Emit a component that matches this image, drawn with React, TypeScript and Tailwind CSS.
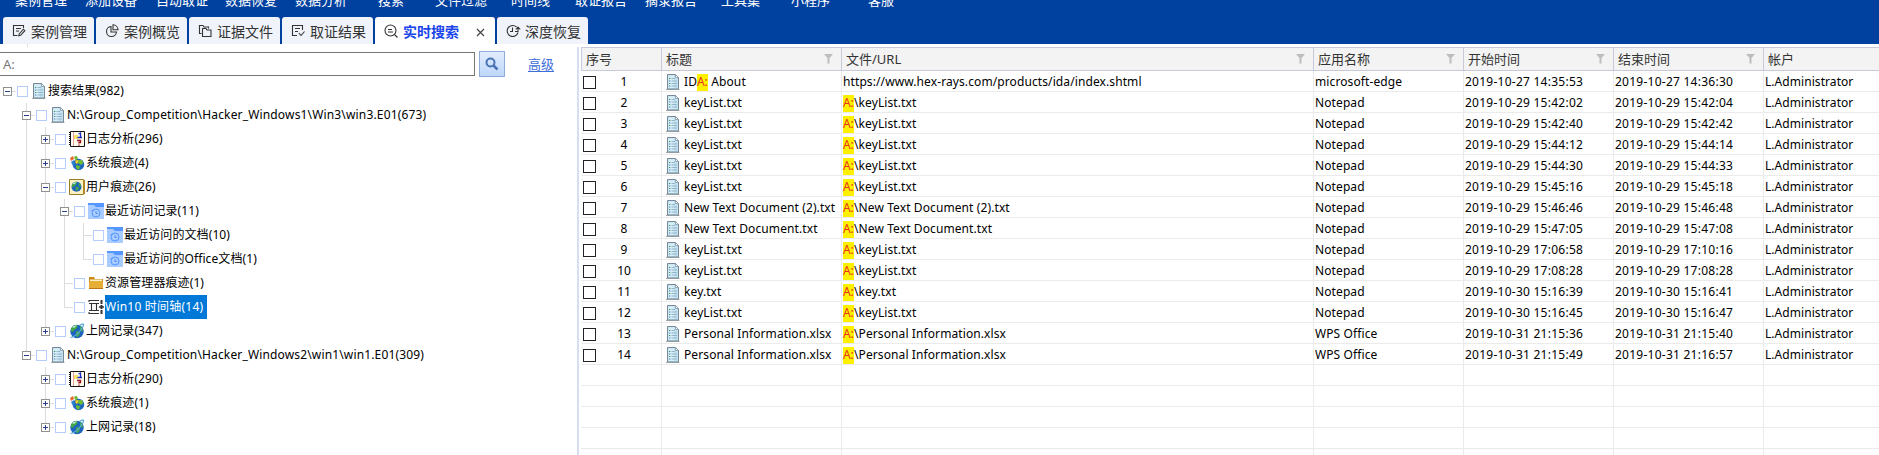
import React from "react";

const menus: [string, string][] = [
  ["案例管理", "w-[70px]"],
  ["添加设备", "w-[71px]"],
  ["自动取证", "w-[69px]"],
  ["数据恢复", "w-[70px]"],
  ["数据分析", "w-[83px]"],
  ["搜索", "w-[57px]"],
  ["文件过滤", "w-[76px]"],
  ["时间线", "w-[64px]"],
  ["取证报告", "w-[70px]"],
  ["摘录报告", "w-[76px]"],
  ["工具集", "w-[70px]"],
  ["小程序", "w-[77px]"],
  ["客服", "w-[40px]"],
];

function TabIcon({ kind }: { kind: string }) {
  return (
    <svg className="h-[14px] w-[14px] shrink-0 overflow-visible" viewBox="0 0 14 14" fill="none" stroke="#333" strokeWidth="1.1">
      {kind === "manage" && (
        <>
          <path d="M11.5 4V1.5H1.5V11.500H5.500M4 4.500H9M4 7H7" />
          <path d="M11.300 5.200L12.800 6.700L8.600 11.300L6.800 11.800L7.200 10Z" />
        </>
      )}
      {kind === "overview" && (
        <>
          <path d="M6 2.500A5 5 0 1 0 11.500 8H6Z" />
          <path d="M8 .8A5.200 5.200 0 0 1 13 5.800H8Z" />
        </>
      )}
      {kind === "files" && (
        <>
          <path d="M3.500 9.500H1.500V1.500H5L6 3H10.500V4.500" />
          <path d="M4.500 4.500H8L9 6H13V12.500H4.500Z" />
        </>
      )}
      {kind === "results" && (
        <>
          <path d="M11.500 6V1.500H1.500V11.500H6M4 4.500H9M4 7.500H7" />
          <path d="M7.800 9L10 11.500L13.500 7.500" />
        </>
      )}
      {kind === "search" && (
        <>
          <circle cx="6.500" cy="6.500" r="5.500" />
          <path d="M10.500 10.500L13.500 13.500M4 5.500H8M4 8H9" />
        </>
      )}
      {kind === "recover" && (
        <>
          <path d="M10.500 3A5.500 5.500 0 1 0 12 8.500M6.500 3.500V7.500H4" />
          <path d="M9 7.500H12V3.500M9.800 5.500L12 3L14.200 5.500" />
        </>
      )}
    </svg>
  );
}

const tabs = [
  { label: "案例管理", kind: "manage" },
  { label: "案例概览", kind: "overview" },
  { label: "证据文件", kind: "files" },
  { label: "取证结果", kind: "results" },
  { label: "实时搜索", kind: "search", active: true },
  { label: "深度恢复", kind: "recover" },
];

function DocIcon() {
  return (
    <svg className="h-4 w-[14px] shrink-0" viewBox="0 0 14 16">
      <path d="M0 15.500H13.500" stroke="#aaa" />
      <path d="M1.500.5H9.500L12.500 3.500V15H1.500Z" fill="#c4e1ef" stroke="#75899a" />
      <path d="M2.500 1.500H8V14H2.500Z" fill="#d7edf7" />
      <path d="M9.500.5V3.500H12.500Z" fill="#fff" stroke="#75899a" strokeWidth=".7" />
      <path d="M5.500 4.500H9M5.500 7H11M5.500 9.500H11M5.500 12H11" stroke="#91b5cb" />
      <path d="M3 4.500H4.300M3 9.500H4.300" stroke="#449657" />
      <path d="M3 7H4.300M3 12H4.300" stroke="#4878b8" />
    </svg>
  );
}

function Globe() {
  return (
    <>
      <circle cx="8" cy="8.500" r="6.700" fill="#1c64bd" />
      <path d="M3 4Q5 1.500 8 2L8.500 4L7 6L5 7L4 9L2 8Q1.500 6 3 4M7 8L11 9L10.500 12L8 14.500L7 12ZM11 3L14 6L13 9L11 7Z" fill="#46a844" />
      <path d="M3 4Q5 2 8 2.500L5 5Z" fill="#b9e7dd" />
    </>
  );
}

function TreeIcon({ kind }: { kind: string }) {
  if (kind === "doc") return <DocIcon />;
  return (
    <svg className="h-4 w-4 shrink-0" viewBox="0 0 16 16">
      {kind === "log" && (
        <>
          <path d="M1.500.5H15.500V15.500H1.500Z" fill="#fffbea" stroke="#111" />
          <path d="M.5 1V15" stroke="#111" strokeDasharray="1 1" />
          <path d="M2 1H4V15H2Z" fill="#fff" />
          <path d="M4.500 1V15" stroke="#e99a9a" />
          <path d="M5 4H9V8H5Z" fill="#f3e36a" />
          <path d="M9.500 3L11.500 2V6M8.500 6.500H13" stroke="#1528c8" strokeWidth="1.300" fill="none" />
          <path d="M8 9.500H11.500V11.500H10V12.500M10 13.500V14.800" stroke="#9d1020" strokeWidth="1.300" fill="none" />
        </>
      )}
      {kind === "system" && (
        <>
          <circle cx="9.500" cy="9.500" r="5.700" fill="#1c64bd" />
          <path d="M9 5L13 5L14.500 8L12 10L9 8ZM7 10L11 11L10 15L7 13Z" fill="#6cba38" />
          <path d="M1 3L4 1L5 4L2 6Z" fill="#e9662d" />
          <path d="M5 1.500L8 1L9 4L6 5Z" fill="#6dbb31" />
          <path d="M2 7L5 5L6 9L4 11Z" fill="#2f7fd1" />
          <path d="M6 5.500L9 5L9 8L7 9Z" fill="#f4c628" />
        </>
      )}
      {kind === "user" && (
        <>
          <path d="M.5.5H14.500V15.500H.5Z" fill="#fbf3c6" stroke="#9a7c20" />
          <path d="M14 1H16V15H14Z" fill="#b08a26" />
          <g transform="translate(1.500 1.400) scale(.75)"><Globe /></g>
        </>
      )}
      {kind === "recent" && (
        <>
          <path d="M0 0H16V16H0Z" fill="#a9cbff" />
          <path d="M0 0H16V4H8L6 2H0Z" fill="#5596ff" />
          <circle cx="8" cy="10" r="4" stroke="#5596ff" fill="none" />
          <path d="M3.500 7.500H6M8 8V10.500H10" stroke="#5596ff" fill="none" />
        </>
      )}
      {kind === "folder" && (
        <>
          <path d="M1 2H6L7 4H15V14H1Z" fill="#c88717" />
          <path d="M2 4.500H14V6H2Z" fill="#fff3c7" />
          <path d="M1 6H15V14H1Z" fill="#e7ad35" />
          <path d="M1 13.500H15" stroke="#b97812" />
        </>
      )}
      {kind === "timeline" && (
        <>
          <path d="M1 3V1.500H11M1 13V14.500H11M3.500 4V12M8.500 4V12M1 4.500H11M1 11.500H11" stroke="#333" strokeWidth="1.100" fill="none" />
          <path d="M13.500 1V15" stroke="#333" strokeWidth="2" strokeDasharray="4 1" />
          <path d="M11 8H16" stroke="#333" strokeWidth="1.500" />
        </>
      )}
      {kind === "web" && (
        <>
          <Globe />
          <path d="M1.500 14.500Q6 14 11 8Q15 3 14.500 1.200Q13 .8 10.500 2.500" fill="none" stroke="#58a6d4" strokeWidth="1.200" />
        </>
      )}
    </svg>
  );
}

type Node = { label: string; icon: string; guides: string; exp?: "+" | "-"; selected?: boolean; fit?: string };

// One letter per indent column: "." blank, "|" passing line, "L" last child, "T" child with siblings below.
const tree: Node[] = [
  { label: "搜索结果(982)", icon: "doc", guides: ".", exp: "-" },
  { label: "N:\\Group_Competition\\Hacker_Windows1\\Win3\\win3.E01(673)", icon: "doc", guides: ".T", exp: "-", fit: "tracking-[0.16px]" },
  { label: "日志分析(296)", icon: "log", guides: ".|T", exp: "+", fit: "tracking-[0.1px]" },
  { label: "系统痕迹(4)", icon: "system", guides: ".|T", exp: "+", fit: "tracking-[0.1px]" },
  { label: "用户痕迹(26)", icon: "user", guides: ".|T", exp: "-", fit: "tracking-[0.1px]" },
  { label: "最近访问记录(11)", icon: "recent", guides: ".||T", exp: "-", fit: "tracking-[0.1px]" },
  { label: "最近访问的文档(10)", icon: "recent", guides: ".|||T", fit: "tracking-[0.1px]" },
  { label: "最近访问的Office文档(1)", icon: "recent", guides: ".|||L", fit: "tracking-[0.1px]" },
  { label: "资源管理器痕迹(1)", icon: "folder", guides: ".||T", fit: "tracking-[0.1px]" },
  { label: "Win10 时间轴(14)", icon: "timeline", guides: ".||L", selected: true, fit: "tracking-[0.22px]" },
  { label: "上网记录(347)", icon: "web", guides: ".|L", exp: "+", fit: "tracking-[0.1px]" },
  { label: "N:\\Group_Competition\\Hacker_Windows2\\win1\\win1.E01(309)", icon: "doc", guides: ".L", exp: "-", fit: "tracking-[0.15px]" },
  { label: "日志分析(290)", icon: "log", guides: "..T", exp: "+", fit: "tracking-[0.1px]" },
  { label: "系统痕迹(1)", icon: "system", guides: "..T", exp: "+", fit: "tracking-[0.1px]" },
  { label: "上网记录(18)", icon: "web", guides: "..L", exp: "+", fit: "tracking-[0.1px]" },
];

function TreeRow({ node }: { node: Node }) {
  const cells = node.guides.split("");
  const own = cells.pop();
  return (
    <div className="flex h-6 items-center">
      {cells.map((c, i) => (
        <span key={i} className="flex h-6 w-[19px] shrink-0 pl-[7px]">
          {c === "|" && <span className="w-px bg-[#dcdcdc]" />}
        </span>
      ))}
      <svg className="h-6 w-[17px] shrink-0" viewBox="0 0 17 24" shapeRendering="crispEdges">
        {own !== "." && <path d={own === "T" ? "M7.500 0V24" : "M7.500 0V12"} stroke="#dcdcdc" />}
        <path d={node.exp ? "M12 12.500H16" : "M7 12.500H16"} stroke="#dcdcdc" />
        {node.exp && (
          <>
            <path d="M3.500 8.500H11.500V16.500H3.500Z" fill="#fff" stroke="#919191" />
            <path d={node.exp === "+" ? "M5 12.500H10M7.500 10V15" : "M5 12.500H10"} stroke="#2b3f8c" />
          </>
        )}
      </svg>
      <span className="h-[11px] w-[11px] shrink-0 border border-[#b5cdfb] bg-white" />
      <span className={"ml-[3px] flex w-[17px] shrink-0 " + (node.icon === "doc" ? "pl-px" : "pl-0")}><TreeIcon kind={node.icon} /></span>
      <span className={"flex h-6 items-center whitespace-pre leading-6 " + (node.fit ?? "tracking-normal") + (node.selected ? " bg-[#0078d7] pr-1 text-white" : "")}>
        {node.label}
      </span>
    </div>
  );
}

const headers: [string, boolean][] = [
  ["序号", false],
  ["标题", true],
  ["文件/URL", true],
  ["应用名称", true],
  ["开始时间", true],
  ["结束时间", true],
  ["帐户", false],
];

const key = "keyList.txt";
const rows: [string, string, string, string][] = [
  ["A: About", "https://www.hex-rays.com/products/ida/index.shtml", "27 14:35:53", "27 14:36:30"],
  [key, key, "29 15:42:02", "29 15:42:04"],
  [key, key, "29 15:42:40", "29 15:42:42"],
  [key, key, "29 15:44:12", "29 15:44:14"],
  [key, key, "29 15:44:30", "29 15:44:33"],
  [key, key, "29 15:45:16", "29 15:45:18"],
  ["New Text Document (2).txt", "New Text Document (2).txt", "29 15:46:46", "29 15:46:48"],
  ["New Text Document.txt", "New Text Document.txt", "29 15:47:05", "29 15:47:08"],
  [key, key, "29 17:06:58", "29 17:10:16"],
  [key, key, "29 17:08:28", "29 17:08:28"],
  ["key.txt", "key.txt", "30 15:16:39", "30 15:16:41"],
  [key, key, "30 15:16:45", "30 15:16:47"],
  ["Personal Information.xlsx", "Personal Information.xlsx", "31 21:15:36", "31 21:15:40"],
  ["Personal Information.xlsx", "Personal Information.xlsx", "31 21:15:49", "31 21:16:57"],
];

const bodyGrid = "grid shrink-0 grid-cols-[81px_180px_472px_150px_150px_150px_150px]";
const headGrid = "grid shrink-0 grid-cols-[80px_180px_472px_150px_150px_150px_150px]";
const cell = "flex items-center overflow-hidden whitespace-pre border-r border-b border-[#ebebeb] pt-[2px]";

function Mark() {
  return <span className="flex h-[17px] w-[11px] items-center bg-[#fff000] tracking-[-0.1px] text-[#e8321e]">A:</span>;
}

function ResultRow({ row, index }: { row: [string, string, string, string]; index: number }) {
  const app = index === 0 ? "microsoft-edge" : index > 11 ? "WPS Office" : "Notepad";
  return (
    <div className={bodyGrid + " h-[21px]"}>
      <div className={cell + " pl-[2px]"}>
        <span className="h-[13px] w-[13px] border border-[#222]" />
        <span className="ml-[15px] w-[26px] text-center">{index + 1}</span>
      </div>
      <div className={cell + " pl-[4px]"}>
        <DocIcon />
        <span className="ml-[4px] flex items-center tracking-[0.1px]">
          {index === 0 ? <>ID<Mark /> About</> : row[0]}
        </span>
      </div>
      <div className={cell + " pl-px tracking-[0.1px]"}>
        {index === 0 ? row[1] : <><Mark />{"\\" + row[1]}</>}
      </div>
      <div className={cell + " pl-[1px] tracking-[0.1px]"}>{app}</div>
      <div className={cell + " pl-[1px] tracking-[0.25px]"}>{"2019-10-" + row[2]}</div>
      <div className={cell + " pl-[1px] tracking-[0.25px]"}>{"2019-10-" + row[3]}</div>
      <div className={cell + " pl-[1px] tracking-[0.06px]"}>L.Administrator</div>
    </div>
  );
}

export default function App() {
  return (
    <div className="flex h-[455px] w-[1879px] flex-col overflow-hidden bg-white font-['Noto_Sans','Noto_Sans_CJK_SC',sans-serif] text-[12px] leading-[16px] text-black">
      <header className="h-11 shrink-0 bg-[#00419f]">
        <nav className="flex h-[17px] overflow-hidden pl-[15px] text-[13px] text-white">
          {menus.map(([name, width]) => (
            <span key={name} className={"-mt-[8px] shrink-0 whitespace-nowrap " + width}>{name}</span>
          ))}
        </nav>
        <div className="flex h-[27px] gap-[2px] pl-[3px]">
          {tabs.map((t) => (
            <div
              key={t.label}
              className={
                "flex h-[27px] items-center rounded-t-[3px] pl-[9px] pt-[3px] text-[14px] " +
                (t.active ? "w-[120px] bg-white font-bold text-[#1a45ea]" : "w-[91px] bg-[#f0f3f9] text-[#333]")
              }
            >
              <span className="-mt-[3px] flex"><TabIcon kind={t.kind} /></span>
              <span className="ml-[5px] whitespace-nowrap">{t.label}</span>
              {t.active && (
                <svg className="ml-[17px] h-[9px] w-[9px]" viewBox="0 0 9 9"><path d="M1 1L8 8M8 1L1 8" stroke="#444" strokeWidth="1.200" /></svg>
              )}
            </div>
          ))}
        </div>
      </header>
      <main className="flex min-h-0 flex-1">
        <aside className="flex w-[577px] shrink-0 flex-col">
          <div className="h-[3px] pl-[27px]"><div className="h-[3px] w-px bg-[#dcdcdc]" /></div>
          <div className="flex h-[32px] items-start pt-[4px]">
            <div className="mt-px flex h-6 w-[475px] items-center border border-l-0 border-[#767676] pl-[3px] text-[13px] text-[#7a7a7a]">A:</div>
            <div className="ml-1 flex h-[26px] w-[26px] items-center justify-center border border-[#8facdc] bg-linear-to-b from-[#e2edfd] to-[#bdd7fa]">
              <svg className="h-[14px] w-[14px]" viewBox="0 0 14 14" fill="none" stroke="#4a73b5" strokeWidth="2">
                <circle cx="5.500" cy="5.500" r="4" />
                <path d="M8.500 8.500L12.500 12.500" strokeWidth="2.500" />
              </svg>
            </div>
            <a className="ml-[23px] mt-[5px] text-[13px] text-[#3e6fd8] underline underline-offset-2">高级</a>
          </div>
          <div>
            {tree.map((node, i) => <TreeRow key={i} node={node} />)}
          </div>
        </aside>
        <section className="flex flex-1 flex-col overflow-hidden pt-[3px]">
          <div className="flex min-h-0 flex-1 flex-col overflow-hidden border-l-2 border-[#d5dff0] pl-[2px]">
            <div className={headGrid + " h-6 border-y border-l border-[#c9c9dc] bg-[#f3f3f3] text-[13px] text-[#333]"}>
              {headers.map(([name, filter]) => (
                <div key={name} className="flex items-center justify-between border-r border-[#c9c9dc] pl-[4px] pr-[8px]">
                  {name}
                  {filter && (
                    <svg className="h-[10px] w-[9px]" viewBox="0 0 9 10"><path d="M0 0H9L5.500 4V9.500H3.500V4Z" fill="#bdbdbd" /></svg>
                  )}
                </div>
              ))}
            </div>
            {rows.map((row, i) => <ResultRow key={i} row={row} index={i} />)}
            {[0, 1, 2, 3, 4].map((n) => (
              <div key={n} className={bodyGrid + " h-[21px]"}>
                {headers.map(([name]) => <div key={name} className={cell} />)}
              </div>
            ))}
          </div>
        </section>
      </main>
    </div>
  );
}
